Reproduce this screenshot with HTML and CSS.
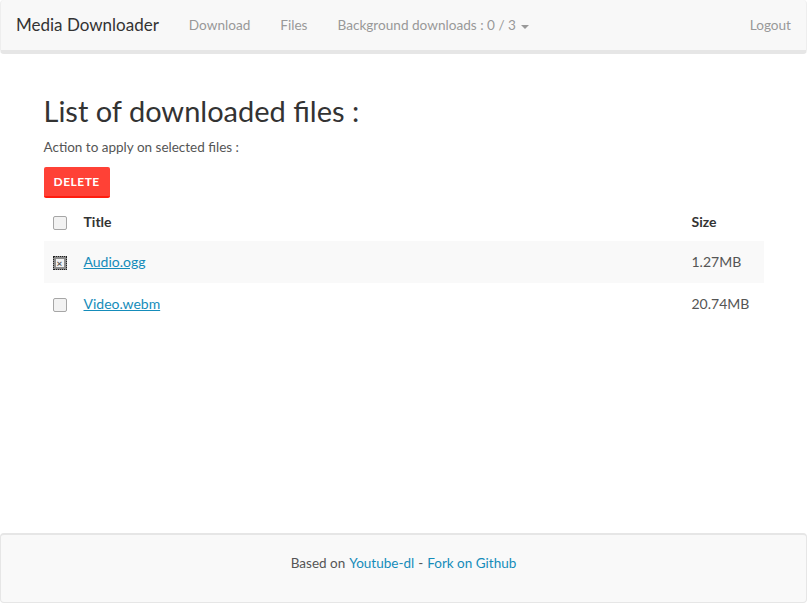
FILE: index.html
```html
<!DOCTYPE html>
<html lang="en">
<head>
<meta charset="utf-8">
<title>Media Downloader</title>
<link rel="stylesheet" href="styles.css">
</head>
<body>
<nav class="navbar">
  <a class="brand" href="#">Media Downloader</a>
  <ul class="nav">
    <li><a href="#">Download</a></li>
    <li><a href="#">Files</a></li>
    <li><a href="#">Background downloads : 0 / 3 <span class="caret"></span></a></li>
  </ul>
  <ul class="nav nav-right">
    <li><a href="#">Logout</a></li>
  </ul>
</nav>

<main class="container">
  <h2 class="title">List of downloaded files :</h2>
  <p class="hint">Action to apply on selected files :</p>
  <button class="btn-danger" type="button">Delete</button>
  <table class="files">
    <thead>
      <tr>
        <th class="col-check"><span class="cb"></span></th>
        <th class="col-title">Title</th>
        <th class="col-size">Size</th>
      </tr>
    </thead>
    <tbody>
      <tr class="striped">
        <td class="col-check"><span class="cb cb-checked"><span class="cb-mark">×</span></span></td>
        <td class="col-title"><a href="#">Audio.ogg</a></td>
        <td class="col-size">1.27MB</td>
      </tr>
      <tr>
        <td class="col-check"><span class="cb"></span></td>
        <td class="col-title"><a href="#">Video.webm</a></td>
        <td class="col-size">20.74MB</td>
      </tr>
    </tbody>
  </table>
</main>

<footer class="footer">
  Based on <a href="#">Youtube-dl</a> - <a href="#">Fork on Github</a>
</footer>
</body>
</html>
```

FILE: styles.css
```css
* { box-sizing: border-box; }

html, body { height: 100%; }

body {
  margin: 0;
  font-family: "Lato", "Open Sans", "Liberation Sans", sans-serif;
  font-size: 14px;
  line-height: 20px;
  color: #555555;
  background: #ffffff;
  display: flex;
  flex-direction: column;
  min-height: 100vh;
}

a { color: #158cba; }

.navbar {
  display: flex;
  align-items: stretch;
  height: 54px;
  background: #f8f8f8;
  border: 1px solid #eeeeee;
  border-top: 0;
  border-bottom: 4px solid #e6e6e6;
  border-radius: 4px;
}

.brand {
  padding: 0 15px;
  font-size: 17px;
  line-height: 50px;
  color: #333333;
  text-decoration: none;
}

.nav {
  list-style: none;
  margin: 0;
  padding: 0;
  display: flex;
}

.nav a {
  display: block;
  padding: 0 15px;
  line-height: 50px;
  color: #999999;
  text-decoration: none;
  font-size: 13.6px;
}

.nav-right { margin-left: auto; }

.caret {
  display: inline-block;
  width: 0;
  height: 0;
  margin-left: 2px;
  vertical-align: middle;
  border-top: 4px solid #999999;
  border-left: 4px solid transparent;
  border-right: 4px solid transparent;
}

.container {
  width: 750px;
  margin: 0 auto;
  padding: 0 15px;
}

.title {
  margin: 39px 0 0;
  font-size: 29px;
  line-height: 36px;
  font-weight: 400;
  color: #333333;
}

.hint {
  margin: 8px 0 10px;
  font-size: 13.5px;
  line-height: 20px;
}

.btn-danger {
  display: block;
  height: 31px;
  padding: 0 10px;
  font-family: inherit;
  font-size: 12px;
  font-weight: 700;
  letter-spacing: 0.5px;
  text-transform: uppercase;
  color: #ffffff;
  background: #ff4136;
  border: 0;
  border-bottom: 2px solid #ff1d0f;
  border-radius: 2px;
}

.files {
  width: 100%;
  border-collapse: collapse;
  margin-top: 9px;
}

.files th,
.files td {
  text-align: left;
  padding: 11px 8px;
  vertical-align: middle;
}

.files th {
  font-weight: 700;
  color: #333333;
  padding-top: 5px;
  padding-bottom: 9px;
}

.files td { height: 42px; }

.files tr.striped td { background: #f9f9f9; }

.col-check { width: 32px; padding-left: 9px !important; }
.col-size { width: 80px; }

.cb {
  display: inline-block;
  width: 14px;
  height: 14px;
  border: 1px solid #a6a6a6;
  border-radius: 2px;
  background: #f2f2f2;
  vertical-align: middle;
}

.cb-checked {
  position: relative;
  background: #8c8c8c;
  border: 1px dotted #222222;
  border-radius: 0;
}

.cb-mark {
  position: absolute;
  left: 2px;
  top: 2px;
  width: 8px;
  height: 8px;
  background: #f2f2f2;
  color: #555555;
  font-size: 10px;
  line-height: 8px;
  text-align: center;
  font-weight: 700;
}

.footer {
  margin-top: auto;
  height: 70px;
  padding: 18px 0 0;
  display: flex;
  align-items: flex-start;
  justify-content: center;
  gap: 4px;
  background: #f9f9f9;
  border: 1px solid #e6e6e6;
  border-top: 2px solid #e6e6e6;
  border-radius: 4px;
  font-size: 13.5px;
  color: #555555;
}

.footer a { text-decoration: none; }
```
